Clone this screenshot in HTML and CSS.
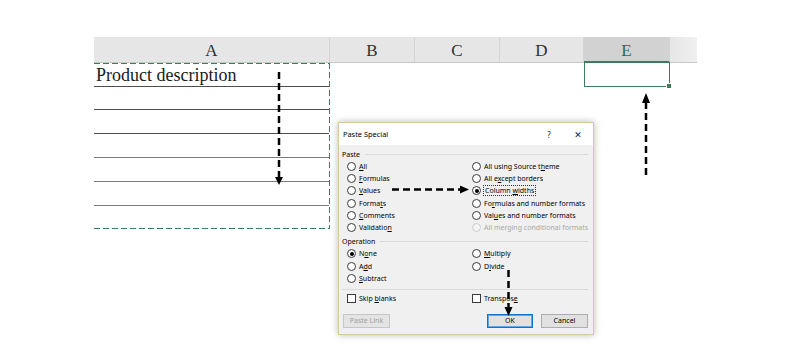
FILE: index.html
```html
<!DOCTYPE html>
<html>
<head>
<meta charset="utf-8">
<link rel="stylesheet" href="styles.css">
</head>
<body>
<div class="page">
  <div class="sheet">
    <div class="colheads">
      <div class="ch ch-a">A</div>
      <div class="ch">B</div>
      <div class="ch">C</div>
      <div class="ch">D</div>
      <div class="ch ch-sel">E</div>
      <div class="ch ch-rest"></div>
    </div>
    <div class="grid">
      <div class="copy-range">
        <div class="row">Product description</div>
        <div class="row row-2"></div>
        <div class="row"></div>
        <div class="row row-light"></div>
        <div class="row row-light"></div>
        <div class="row row-light"></div>
        <div class="row row-last"></div>
      </div>
      <div class="col-gap"></div>
      <div class="sel-cell"><span class="handle"></span></div>
    </div>
  </div>

  <div class="dialog">
    <div class="titlebar">
      <span class="title">Paste Special</span>
      <span class="tb-btn">?</span>
      <span class="tb-btn tb-close">✕</span>
    </div>
    <div class="dbody">
      <div class="group-label"><span>Paste</span></div>
      <div class="options">
        <div class="opt"><span class="radio"></span><span class="lbl"><u>A</u>ll</span></div>
        <div class="opt"><span class="radio"></span><span class="lbl">All using Source t<u>h</u>eme</span></div>
        <div class="opt"><span class="radio"></span><span class="lbl"><u>F</u>ormulas</span></div>
        <div class="opt"><span class="radio"></span><span class="lbl">All e<u>x</u>cept borders</span></div>
        <div class="opt"><span class="radio"></span><span class="lbl"><u>V</u>alues</span></div>
        <div class="opt"><span class="radio checked"></span><span class="lbl focus">Column <u>w</u>idths</span></div>
        <div class="opt"><span class="radio"></span><span class="lbl">Forma<u>t</u>s</span></div>
        <div class="opt"><span class="radio"></span><span class="lbl">Fo<u>r</u>mulas and number formats</span></div>
        <div class="opt"><span class="radio"></span><span class="lbl"><u>C</u>omments</span></div>
        <div class="opt"><span class="radio"></span><span class="lbl">Val<u>u</u>es and number formats</span></div>
        <div class="opt"><span class="radio"></span><span class="lbl">Validatio<u>n</u></span></div>
        <div class="opt disabled"><span class="radio"></span><span class="lbl">All merging conditional formats</span></div>
      </div>
      <div class="group-label"><span>Operation</span></div>
      <div class="options">
        <div class="opt"><span class="radio checked"></span><span class="lbl">N<u>o</u>ne</span></div>
        <div class="opt"><span class="radio"></span><span class="lbl"><u>M</u>ultiply</span></div>
        <div class="opt"><span class="radio"></span><span class="lbl">A<u>d</u>d</span></div>
        <div class="opt"><span class="radio"></span><span class="lbl">D<u>i</u>vide</span></div>
        <div class="opt"><span class="radio"></span><span class="lbl"><u>S</u>ubtract</span></div>
        <div class="opt"></div>
      </div>
      <div class="separator"></div>
      <div class="options">
        <div class="opt"><span class="check"></span><span class="lbl">Skip <u>b</u>lanks</span></div>
        <div class="opt"><span class="check"></span><span class="lbl">Transpos<u>e</u></span></div>
      </div>
      <div class="buttons">
        <span class="btn btn-disabled">Paste Link</span>
        <span class="btn-spacer"></span>
        <span class="btn btn-default">OK</span>
        <span class="btn">Cancel</span>
      </div>
    </div>
  </div>

  <svg class="arrows" width="790" height="355" viewBox="0 0 790 355">
    <g stroke="#000" stroke-width="2.5" stroke-dasharray="7 4" fill="none">
      <line x1="279" y1="72" x2="279" y2="178"/>
      <line x1="392" y1="189.5" x2="460" y2="189.5"/>
      <line x1="646" y1="175" x2="646" y2="103"/>
      <line x1="508.5" y1="270" x2="508.5" y2="308"/>
    </g>
    <g fill="#000">
      <polygon points="275,177 283,177 279,185"/>
      <polygon points="460,185.5 460,193.5 469,189.5"/>
      <polygon points="642,103 650,103 646,93"/>
      <polygon points="504.5,307 512.5,307 508.5,316"/>
    </g>
  </svg>
</div>
</body>
</html>
```

FILE: styles.css
```css
html, body {
  margin: 0;
  padding: 0;
  background: #ffffff;
}

.page {
  position: relative;
  width: 790px;
  height: 355px;
  overflow: hidden;
  padding: 37px 0 0 94px;
  box-sizing: border-box;
}

.sheet {
  width: 603px;
  font-family: "Liberation Serif", "DejaVu Serif", serif;
  color: #222;
}

.colheads {
  display: grid;
  grid-template-columns: 236px 85px 85px 84px 86px 27px;
  height: 26px;
  background: #e6e6e6;
  border-bottom: 1px solid #c8c8c8;
  box-sizing: border-box;
}

.ch {
  display: flex;
  align-items: center;
  justify-content: center;
  font-size: 17px;
  color: #303030;
  border-right: 1px solid #d4d4d4;
  padding-top: 3px;
}

.ch-sel {
  background: #d2d2d2;
  color: #2f6a4a;
  border-bottom: 2px solid #3f7a5c;
  margin-bottom: -1px;
}

.ch-rest {
  border-right: none;
  background: linear-gradient(to right, #e6e6e6, #f0f0f0);
}

.grid {
  display: grid;
  grid-template-columns: 236px 254px 86px;
  align-items: start;
}

.copy-range {
  height: 166px;
  box-sizing: border-box;
  padding: 1px 1px 1px 0;
  background:
    repeating-linear-gradient(to right, #3e7c60 0 6px, transparent 6px 9px) top left / 100% 1px no-repeat,
    repeating-linear-gradient(to right, #3e7c60 0 6px, transparent 6px 9px) bottom left / 100% 1px no-repeat,
    repeating-linear-gradient(to bottom, #3e7c60 0 6px, transparent 6px 9px) top right / 1px 100% no-repeat;
}

.row {
  height: 24px;
  box-sizing: border-box;
  border-bottom: 1px solid #4e4e4e;
  font-size: 18px;
  line-height: 23px;
  padding-left: 2px;
  color: #1a1a1a;
  white-space: nowrap;
}

.row:first-child {
  height: 23px;
}

.row-2 {
  height: 23px;
}

.row-light {
  border-bottom-color: #7c7c7c;
}

.row-last {
  border-bottom: none;
  height: 22px;
}

.sel-cell {
  position: relative;
  height: 25px;
  margin-top: -1px;
  box-sizing: border-box;
  border: 1px solid #3f7a5c;
}

.handle {
  position: absolute;
  right: -3px;
  bottom: -3px;
  width: 4px;
  height: 4px;
  background: #3f7a5c;
  border: 1px solid #fff;
}

/* Dialog window (floats over the sheet) */
.dialog {
  position: absolute;
  left: 338px;
  top: 122px;
  width: 256px;
  height: 213px;
  box-sizing: border-box;
  border: 1px solid #d8c8a0;
  background: #f0f0f0;
  box-shadow: 0 0 7px rgba(0, 0, 0, 0.28);
  font-family: "Noto Sans", "DejaVu Sans", sans-serif;
  font-size: 7px;
  color: #000;
  display: flex;
  flex-direction: column;
}

.titlebar {
  height: 22px;
  background: #ffffff;
  display: flex;
  align-items: center;
  padding: 0 0 0 4px;
  flex-shrink: 0;
}

.title {
  flex: 1;
  font-size: 7.4px;
}

.tb-btn {
  width: 28px;
  text-align: center;
  font-size: 8px;
  color: #222;
}

.tb-close {
  font-size: 9px;
  width: 30px;
}

.dbody {
  padding: 1px 5px 0 3px;
  display: flex;
  flex-direction: column;
}

.group-label {
  display: flex;
  align-items: center;
  height: 12px;
  margin-top: 2px;
}

.group-label::after {
  content: "";
  flex: 1;
  margin-left: 5px;
  border-top: 1px solid #dadada;
}

.options {
  display: grid;
  grid-template-columns: 125px 1fr;
  grid-auto-rows: 12.3px;
  padding-left: 5px;
}

.opt {
  display: flex;
  align-items: center;
  white-space: nowrap;
}

.lbl {
  white-space: pre;
}

.lbl u {
  text-decoration: underline;
  text-underline-offset: 1px;
}

.radio {
  width: 9px;
  height: 9px;
  box-sizing: border-box;
  border: 1px solid #3a3a3a;
  border-radius: 50%;
  background: #fff;
  margin-right: 3px;
  flex-shrink: 0;
  position: relative;
}

.radio.checked::after {
  content: "";
  position: absolute;
  left: 1.5px;
  top: 1.5px;
  width: 4px;
  height: 4px;
  border-radius: 50%;
  background: #000;
}

.disabled {
  color: #a8a8a8;
}

.disabled .radio {
  border-color: #cccccc;
  background: #f4f4f4;
}

.focus {
  outline: 1px dotted #333;
  outline-offset: 0;
  padding: 0 1px;
}

.check {
  width: 9px;
  height: 9px;
  box-sizing: border-box;
  border: 1px solid #3a3a3a;
  background: #fff;
  margin-right: 3px;
  flex-shrink: 0;
}

.separator {
  border-top: 1px solid #dadada;
  margin: 4px 0 3px 0;
}

.buttons {
  display: flex;
  align-items: center;
  margin-top: 9px;
  gap: 8px;
  padding-left: 1px;
}

.btn-spacer {
  flex: 1;
}

.btn {
  width: 47px;
  height: 14px;
  box-sizing: border-box;
  border: 1px solid #adadad;
  background: #e1e1e1;
  display: flex;
  align-items: center;
  justify-content: center;
  font-size: 7px;
}

.btn-disabled {
  color: #a0a0a0;
  border-color: #c6c6c6;
  background: #e4e4e4;
}

.btn-default {
  width: 46px;
  border: 1px solid #0a74d0;
  box-shadow: inset 0 0 0 1px #5ca8e8;
}

.arrows {
  position: absolute;
  left: 0;
  top: 0;
  pointer-events: none;
}
```
